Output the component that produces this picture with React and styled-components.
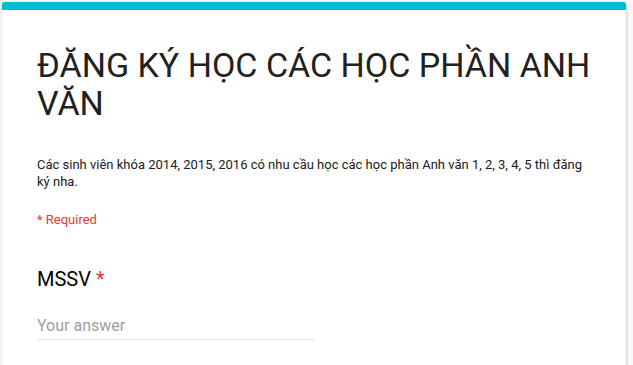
import styled, { createGlobalStyle } from 'styled-components';

const GlobalStyle = createGlobalStyle`
  html, body {
    margin: 0;
    padding: 0;
    background: #fafafa;
  }
  body {
    font-family: Roboto, "Noto Sans", Arial, sans-serif;
    overflow: hidden;
  }
`;

const Page = styled.div`
  padding: 2px 7px 0 2px;
`;

const Card = styled.div`
  background: #fff;
  border-top: 8px solid #00bcd4;
  border-radius: 3px 3px 0 0;
  box-shadow: 0 0 2px rgba(0, 0, 0, 0.18), 1px 1px 3px rgba(0, 0, 0, 0.12);
  padding: 36px 33px 40px 35px;
  min-height: 400px;
`;

const Title = styled.h1`
  margin: 0;
  font-weight: 400;
  font-size: 34px;
  line-height: 38px;
  color: #212121;
`;

const Description = styled.p`
  margin: 34px 0 0;
  font-size: 13px;
  line-height: 17px;
  color: #202020;
`;

const RequiredNote = styled.div`
  margin-top: 21px;
  font-size: 13px;
  line-height: 17px;
  color: #e53935;
`;

const Question = styled.div`
  margin-top: 39px;
`;

const QuestionTitle = styled.div`
  font-size: 20px;
  line-height: 24px;
  color: #000;
`;

const Star = styled.span`
  color: #e53935;
  margin-left: 5px;
`;

const AnswerInput = styled.input`
  display: block;
  margin-top: 25px;
  width: 50%;
  box-sizing: border-box;
  border: none;
  border-bottom: 1px solid #e0e0e0;
  padding: 0 0 3px;
  font-family: Roboto, Arial, sans-serif;
  font-size: 16px;
  line-height: 20px;
  color: #212121;
  background: transparent;
  outline: none;

  &::placeholder {
    color: #9e9e9e;
  }
`;

export default function App() {
  return (
    <Page>
      <GlobalStyle />
      <Card>
        <Title>ĐĂNG KÝ HỌC CÁC HỌC PHẦN ANH VĂN</Title>
        <Description>
          Các sinh viên khóa 2014, 2015, 2016 có nhu cầu học các học phần Anh văn 1, 2, 3, 4, 5 thì đăng ký nha.
        </Description>
        <RequiredNote>* Required</RequiredNote>
        <Question>
          <QuestionTitle>
            MSSV<Star>*</Star>
          </QuestionTitle>
          <AnswerInput type="text" placeholder="Your answer" />
        </Question>
      </Card>
    </Page>
  );
}
